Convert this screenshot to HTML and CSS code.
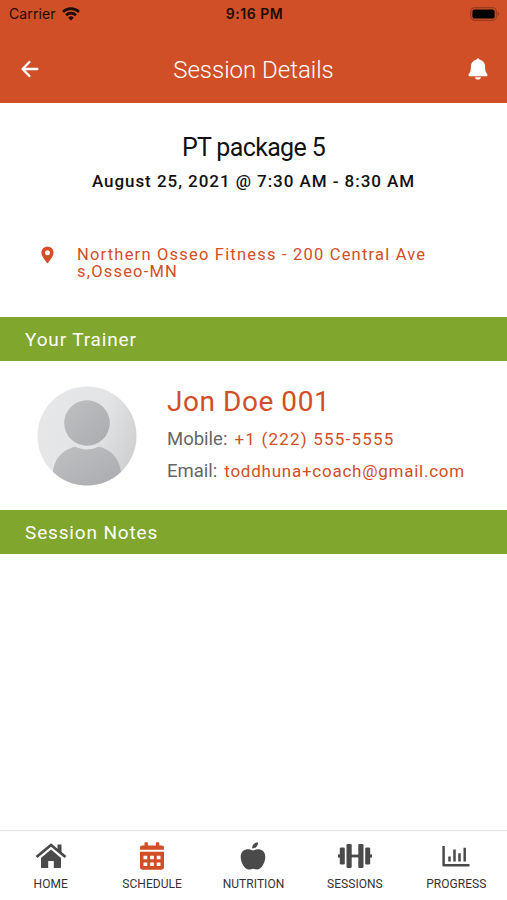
FILE: index.html
```html
<!DOCTYPE html>
<html lang="en">
<head>
  <meta charset="UTF-8" />
  <meta name="viewport" content="width=device-width, initial-scale=1" />
  <title>Session Details</title>
  <link rel="stylesheet" href="styles.css">
</head>
<body>
  <div class="app">
    <!-- Header -->
    <header class="header">
      <div class="status-bar">
        <div class="carrier">
          <span>Carrier</span>
          <svg class="wifi" viewBox="0 0 18 14" width="18" height="14">
            <g fill="none" stroke="#1c0a04" stroke-width="2.7">
              <path d="M1 4.9a11.4 11.4 0 0 1 16 0" />
              <path d="M4.1 8.2a7 7 0 0 1 9.8 0" />
            </g>
            <path d="M9 13.6 6.2 10.7a4 4 0 0 1 5.6 0z" fill="#1c0a04" />
          </svg>
        </div>
        <span class="time">9:16 PM</span>
        <svg class="battery" viewBox="0 0 30 14" width="30" height="14">
          <rect x=".7" y=".7" width="25.6" height="12.6" rx="3.8" fill="none" stroke="#9a3b1e" stroke-width="1.2" />
          <rect x="2.4" y="2.4" width="22.2" height="9.2" rx="2.2" fill="#000" />
          <path d="M27.6 5q1.6.6 1.6 2t-1.6 2z" fill="#9a3b1e" />
        </svg>
      </div>
      <div class="nav-bar">
        <svg class="back" viewBox="0 0 18 18" width="18" height="18">
          <path d="M16.4 9H2M8.4 2 1.6 9l6.8 7" fill="none" stroke="#fff" stroke-width="2.3" stroke-linecap="round" stroke-linejoin="round" />
        </svg>
        <h1>Session Details</h1>
        <svg class="bell" viewBox="0 0 20 22" width="20" height="22">
          <path d="M10 .4c-1 0-1.6.6-1.6 1.3C5.300 2.300 2.900 4.800 2.900 8.300c0 4.600-.8 6.100-1.900 7.400-1.100 1.200-.4 2.600 1 2.600h16c1.400 0 2.100-1.400 1-2.600-1.100-1.300-1.900-2.800-1.900-7.400 0-3.500-2.400-6-5.500-6.600 0-.7-.6-1.300-1.600-1.300zM7 19.200h6c-.2 1.400-1.400 2.300-3 2.300s-2.800-.9-3-2.300z" fill="#fff" />
        </svg>
      </div>
    </header>

    <!-- Session info -->
    <section class="session">
      <h2>PT package 5</h2>
      <p class="date">August 25, 2021 @ 7:30 AM - 8:30 AM</p>
      <div class="location">
        <svg class="pin" viewBox="0 0 13 18" width="13" height="18">
          <path fill-rule="evenodd" d="M6.500.4A6.100 6.100 0 0 0 .4 6.500c0 4.300 6.100 10.800 6.100 10.800s6.100-6.500 6.100-10.800A6.100 6.100 0 0 0 6.500.4zm0 3.800a2.500 2.500 0 1 1 0 5 2.500 2.500 0 0 1 0-5z" fill="#d04f27" />
        </svg>
        <p class="address">Northern Osseo Fitness - 200 Central Ave<br>s,Osseo-MN</p>
      </div>
    </section>

    <h3 class="section-title">Your Trainer</h3>
    <section class="trainer">
      <svg class="avatar" viewBox="0 0 100 100" width="100" height="100">
        <defs>
          <linearGradient id="avatarBg" x1="0" y1=".3" x2="1" y2=".7">
            <stop offset="0" stop-color="#e5e7e8" />
            <stop offset=".55" stop-color="#e2e4e5" />
            <stop offset="1" stop-color="#cdcfd1" />
          </linearGradient>
          <linearGradient id="avatarBody" x1="0" y1="0" x2="1" y2="1">
            <stop offset="0" stop-color="#bfc0c2" />
            <stop offset="1" stop-color="#aaabae" />
          </linearGradient>
          <clipPath id="avatarClip"><circle cx="50" cy="50" r="49.500" /></clipPath>
        </defs>
        <circle cx="50" cy="50" r="49.500" fill="url(#avatarBg)" />
        <circle cx="50" cy="37" r="22.800" fill="url(#avatarBody)" />
        <path clip-path="url(#avatarClip)" d="M16 88c0-13 9-24.500 22-27.200q12 5.400 24 0C75 63.500 84 75 84 88v14H16z" fill="url(#avatarBody)" />
      </svg>
      <div class="trainer-info">
        <h4>Jon Doe 001</h4>
        <p class="mobile"><span class="label">Mobile:</span><span class="value">+1 (222) 555-5555</span></p>
        <p class="email"><span class="label">Email:</span><span class="value">toddhuna+coach@gmail.com</span></p>
      </div>
    </section>

    <h3 class="section-title">Session Notes</h3>
    <section class="notes"></section>

    <!-- Bottom tabs -->
    <nav class="tabs">
      <div class="tab">
        <svg viewBox="0 0 32 28" width="32" height="28">
          <path d="M16 7.500 26 16v9.200q0 .8-.8.8h-6.400v-7h-5.600v7H6.800q-.8 0-.8-.8V16z" />
          <path d="M1.500 15 16 3l14.500 12" fill="none" stroke="currentColor" stroke-width="2.800" />
          <path d="M22.500 2.500h4v9l-4-3.500z" />
        </svg>
        <span>HOME</span>
      </div>
      <div class="tab active">
        <svg viewBox="0 0 26 28" width="26" height="28">
          <path fill-rule="evenodd" d="M5.500 3.500V1q0-.8.8-.8h1.800q.8 0 .8.800v2.500h8V1q0-.8.8-.8h1.800q.8 0 .8.800v2.500h2.600q2.100 0 2.100 2.100v2.200H1V5.600q0-2.100 2.100-2.100zM1 9.700h24v15.600q0 2.400-2.400 2.400H3.400Q1 27.700 1 25.300zM4.500 13.700v3.600h3.800v-3.600zm6.600 0v3.600h3.800v-3.600zm6.600 0v3.600h3.800v-3.600zM4.500 20.500v3.600h3.800v-3.600zm6.600 0v3.600h3.800v-3.600zm6.600 0v3.600h3.800v-3.600z" />
        </svg>
        <span>SCHEDULE</span>
      </div>
      <div class="tab">
        <svg viewBox="0 0 26 28" width="26" height="28">
          <path d="M13 8.500c2-.7 3.800-1.600 6.200-1.200C23.400 8 25.300 11.400 25.300 15c0 6-4.200 12.500-8.300 12.500-1.600 0-2.600-.8-4-.8s-2.400.8-4 .8C4.900 27.500.7 21 .7 15c0-3.600 1.900-7 6.100-7.700 2.400-.4 4.200.5 6.200 1.200zM12.200 6.400C12 3.200 14 .7 18 .3c.3 3.600-2 6-5.800 6.100z" />
        </svg>
        <span>NUTRITION</span>
      </div>
      <div class="tab">
        <svg viewBox="0 0 36 28" width="36" height="28">
          <rect x="1" y="12.400" width="2.500" height="3.200" />
          <rect x="2.800" y="5.500" width="5" height="17" rx="1.300" />
          <rect x="9.500" y="2" width="5.200" height="24" rx="1.300" />
          <rect x="14" y="12.600" width="8" height="2.800" />
          <rect x="21.300" y="2" width="5.200" height="24" rx="1.300" />
          <rect x="28.200" y="5.500" width="5" height="17" rx="1.300" />
          <rect x="32.500" y="12.400" width="2.500" height="3.200" />
        </svg>
        <span>SESSIONS</span>
      </div>
      <div class="tab">
        <svg viewBox="0 0 28 28" width="28" height="28">
          <path d="M1.600 4v19.300H27.500M7.500 14.500v5M12.500 7.500v12M17.500 11.300v8.200M22.700 5.800v13.700" fill="none" stroke="currentColor" stroke-width="2.500" stroke-linejoin="round" />
        </svg>
        <span>PROGRESS</span>
      </div>
    </nav>
  </div>
</body>
</html>
```

FILE: styles.css
```css
/* Global Styles */
* {
  box-sizing: border-box;
}
body {
  margin: 0;
  background: #fff;
  font-family: Roboto, "Noto Sans", sans-serif;
  color: #111;
}
h1, h2, h3, h4, p {
  margin: 0;
  font-weight: 400;
  white-space: nowrap;
}
svg {
  display: block;
  flex: none;
}
.app {
  height: 900px;
  display: flex;
  flex-direction: column;
  overflow: hidden;
}

/* Header */
.header {
  height: 103.400px;
  background: #d04f27;
}
.status-bar {
  height: 27px;
  padding: 0 7px 0 9px;
  display: grid;
  grid-template-columns: 1fr auto 1fr;
  align-items: center;
  font-family: Inter, sans-serif;
  font-size: 14px;
  color: #1c0a04;
}
.carrier {
  display: flex;
  align-items: center;
  gap: 6px;
  letter-spacing: 0.1px;
}
.time {
  font-weight: 600;
  letter-spacing: 0.5px;
}
.battery {
  justify-self: end;
}
.nav-bar {
  height: 76px;
  padding: 8px 19px 0 21px;
  display: flex;
  align-items: center;
  justify-content: space-between;
  color: #fff;
}
.nav-bar h1 {
  padding-top: 1px;
  font-size: 24px;
  font-weight: 300;
}

/* Session info */
.session {
  height: 214px;
  padding-top: 29px;
  text-align: center;
}
.session h2 {
  font-size: 25px;
  line-height: 32px;
  letter-spacing: -0.65px;
}
.date {
  margin-top: 6px;
  font-size: 17px;
  line-height: 22px;
  letter-spacing: 0.95px;
  font-weight: 500;
}
.location {
  display: flex;
  gap: 23px;
  margin-top: 54px;
  padding-left: 41px;
  text-align: left;
  color: #d04f27;
}
.address {
  font-size: 16.500px;
  line-height: 17px;
  letter-spacing: 1.200px;
}

/* Section bars */
.section-title {
  height: 44px;
  padding-left: 25px;
  background: #80a62d;
  color: #fff;
  font-size: 19px;
  line-height: 46px;
  letter-spacing: 0.850px;
}

/* Trainer */
.trainer {
  height: 149px;
  padding: 25px 0 0 37px;
  display: flex;
  gap: 30px;
}
.trainer h4 {
  font-size: 28px;
  line-height: 32px;
  letter-spacing: 0.550px;
  color: #d04f27;
}
.trainer-info p {
  display: flex;
  align-items: center;
  height: 32px;
}
.mobile {
  margin-top: 5px;
}
.label {
  font-size: 18.500px;
  color: #666;
}
.value {
  margin-left: 7px;
  font-size: 17px;
  letter-spacing: 0.750px;
  color: #d04f27;
}
.mobile .value {
  letter-spacing: 1.200px;
}
.notes {
  flex: 1;
}

/* Bottom tabs */
.tabs {
  height: 70px;
  padding: 11px 0 0;
  border-top: 1px solid #e4e4e4;
  display: grid;
  grid-template-columns: repeat(5, 1fr);
}
.tab {
  display: flex;
  flex-direction: column;
  align-items: center;
  gap: 6px;
  color: #4a4a4a;
}
.tab svg {
  fill: currentColor;
}
.tab span {
  font-size: 12px;
  line-height: 16px;
  letter-spacing: 0.050px;
  color: #333;
}
.tab.active svg {
  color: #d04f27;
}
```
